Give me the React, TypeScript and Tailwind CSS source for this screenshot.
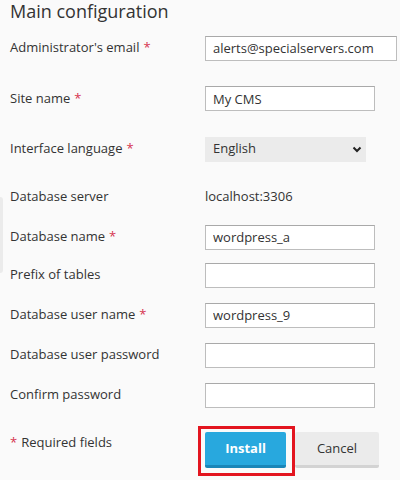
import React from 'react';

const Req = () => <span className="text-[#d6334f] ml-1">*</span>;

const Field = ({ value = '', w = 'w-[170px]' }: { value?: string; w?: string }) => (
  <input
    readOnly
    value={value}
    className={`${w} h-[25px] border border-[#bdbdbd] border-t-[#a9a9a9] bg-white px-[7px] text-[13px] text-[#333] outline-none`}
  />
);

const Row = ({ h, label, req, children }: { h: string; label: string; req?: boolean; children?: React.ReactNode }) => (
  <div className={`flex items-center ${h}`}>
    <div className="w-[195px] shrink-0">
      {label}
      {req && <Req />}
    </div>
    <div className="flex-1">{children}</div>
  </div>
);

export default function App() {
  return (
    <div
      className="relative w-[400px] h-[480px] bg-[#fafafa] text-[#333] text-[13px] px-[10px] overflow-hidden"
      style={{ fontFamily: '"Open Sans", "Noto Sans", sans-serif' }}
    >
      <div className="absolute left-0 top-[197px] w-[3px] h-[76px] bg-[#ebebeb] rounded-r" />
      <h1 className="h-[23px] text-[18px] leading-[23px] text-[#333]">Main configuration</h1>
      <Row h="h-[50px]" label="Administrator's email" req>
        <Field value="alerts@specialservers.com" w="w-[192px]" />
      </Row>
      <Row h="h-[51px]" label="Site name" req>
        <Field value="My CMS" />
      </Row>
      <Row h="h-[50px]" label="Interface language" req>
        <div className="w-[161px] h-[25px] bg-[#ebebeb] flex items-center justify-between pl-[8px] pr-[4px]">
          <span>English</span>
          <svg width="10" height="10" viewBox="0 0 10 10">
            <path d="M1.5 3.5 L5 7 L8.5 3.5" fill="none" stroke="#222" strokeWidth="2" />
          </svg>
        </div>
      </Row>
      <Row h="h-[45px]" label="Database server">
        <span>localhost:3306</span>
      </Row>
      <Row h="h-[36px]" label="Database name" req>
        <Field value="wordpress_a" />
      </Row>
      <Row h="h-[40px]" label="Prefix of tables">
        <Field />
      </Row>
      <Row h="h-[40px]" label="Database user name" req>
        <Field value="wordpress_9" />
      </Row>
      <Row h="h-[40px]" label="Database user password">
        <Field />
      </Row>
      <Row h="h-[40px]" label="Confirm password">
        <Field />
      </Row>
      <div className="flex items-start pt-[11px]">
        <div className="w-[188px] shrink-0 pt-[7px]">
          <span className="text-[#d6334f] mr-1">*</span>Required fields
        </div>
        <div className="border-[3px] border-[#e3151f] pt-[3px] pb-[5px] pl-[4px] pr-[6px]">
          <button className="w-[81px] h-[36px] bg-[#28a8de] border-b-[3px] border-[#1a86b8] rounded-[2px] text-white font-bold text-[13px]">
            Install
          </button>
        </div>
        <button className="mt-[6px] w-[84px] h-[36px] bg-[#ebebeb] border-b-[3px] border-[#d3d3d3] rounded-[2px] text-[#333] text-[13px]">
          Cancel
        </button>
      </div>
    </div>
  );
}
